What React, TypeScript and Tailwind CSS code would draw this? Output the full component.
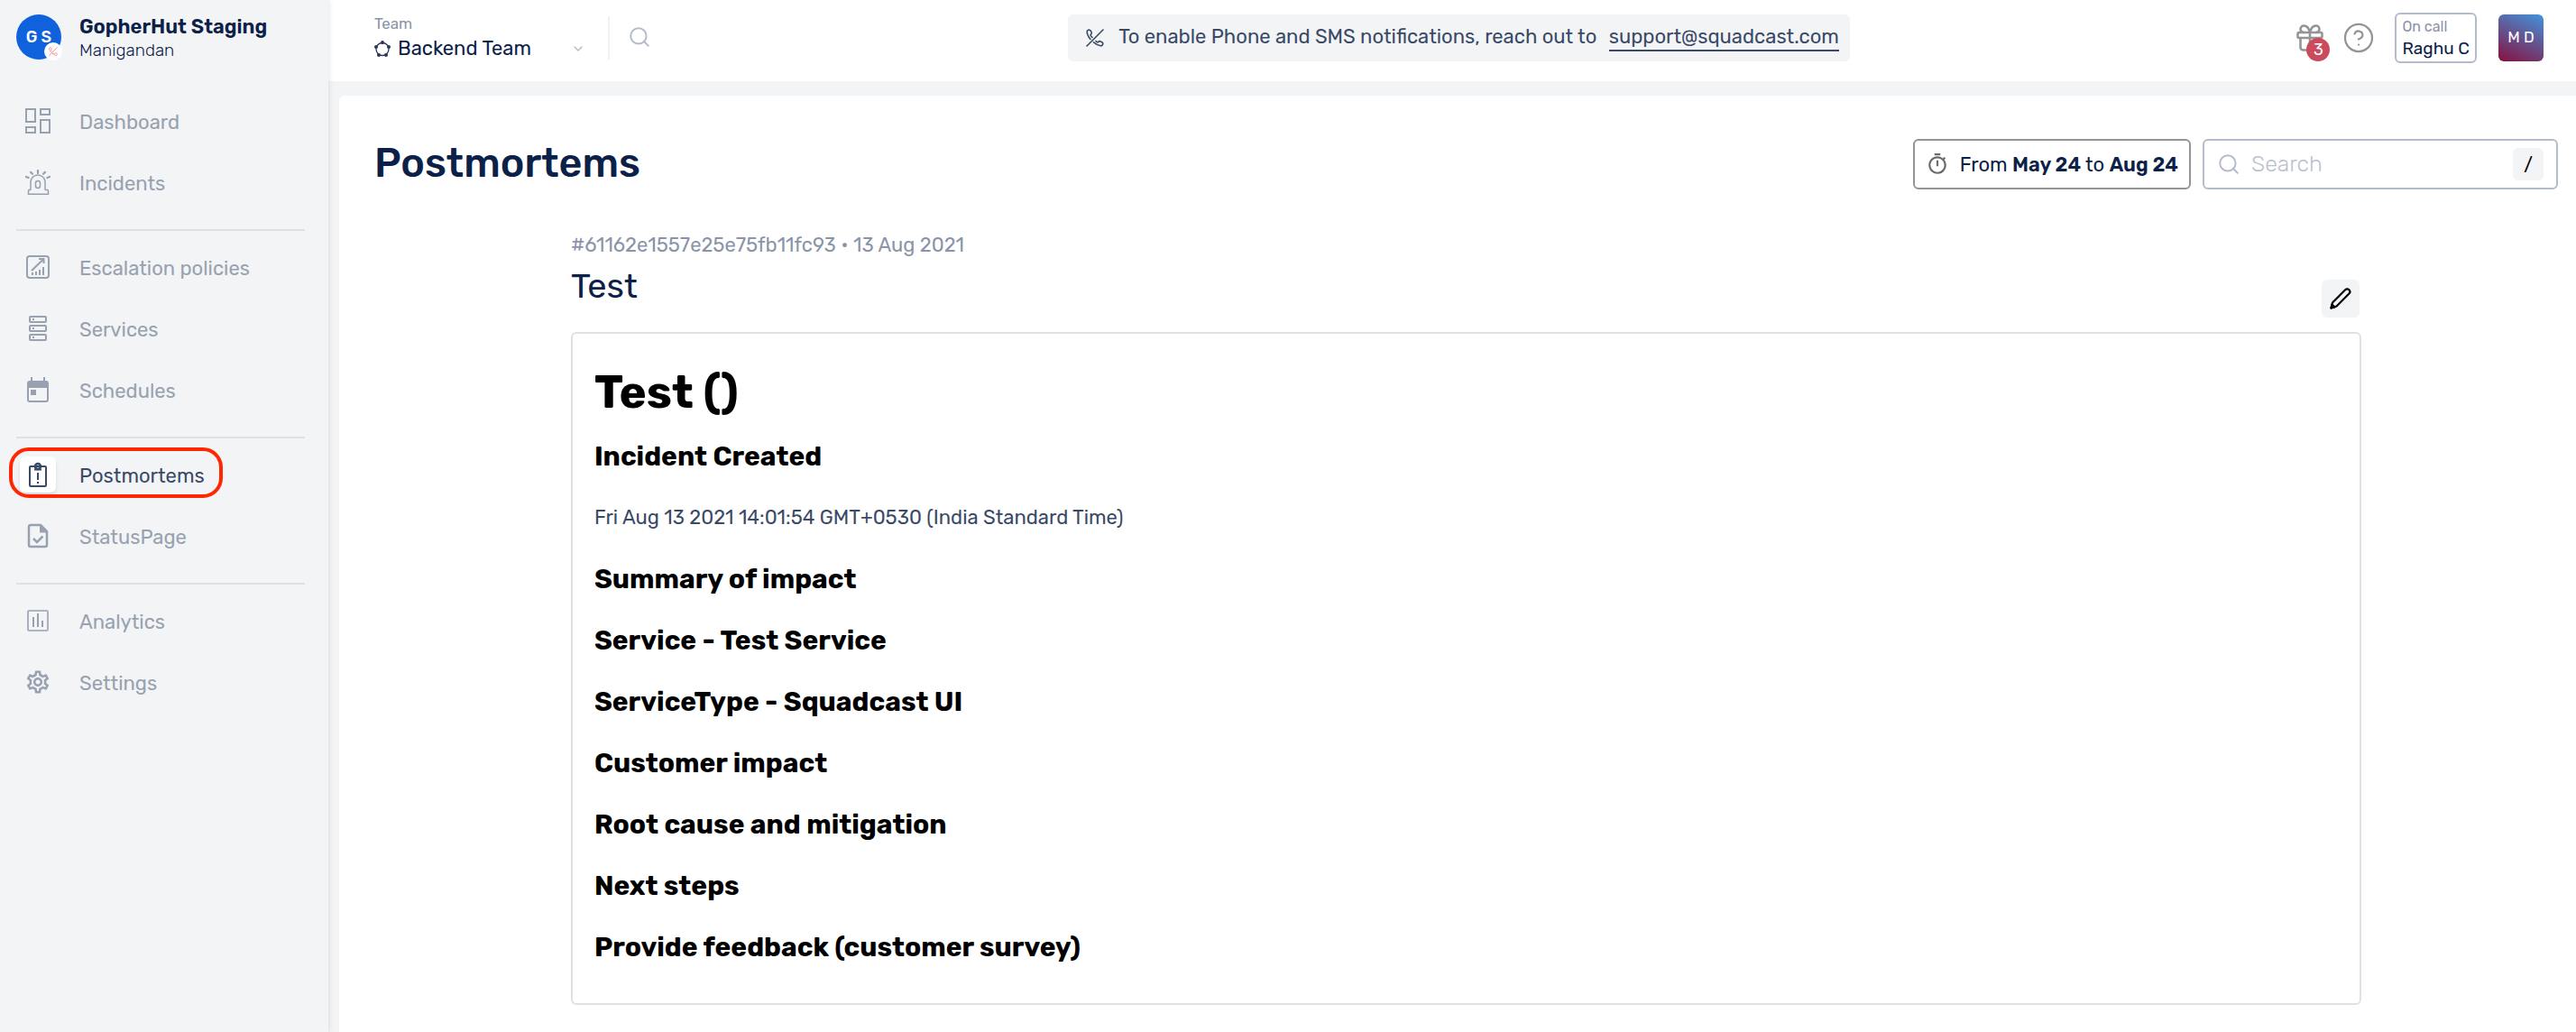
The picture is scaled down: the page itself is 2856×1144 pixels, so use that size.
import type { ReactNode } from "react";
import { ChevronDown, CircleHelp, Gift, Search } from "lucide-react";
import { MdOutlineSettings, MdOutlineTimer } from "react-icons/md";

function PhoneOff({ className }: { className: string }) {
  return (
    <svg viewBox="0 0 20 20" fill="none" stroke="currentColor" strokeWidth="1.6" strokeLinecap="round" strokeLinejoin="round" className={className} aria-hidden="true">
      <path d="M19 1 1 19" />
      <path d="M5 11.5C2.6 8.6 1.2 5.6 1.2 3.2 1.2 1.6 2.8 1 4 1.2c1.1.2 1.9 1.7 2.3 3 .3 1.1-.6 1.6-1.1 2.1-.4.5.8 2.2 1.8 3.2" />
      <path d="M8.5 14.8c2.4 2 5 3.6 7.6 4 1.6.2 2.7-1.2 2.7-2.6 0-1.2-1.7-2-3-2.5-1.2-.5-1.7.4-2.2 1-.5.5-1.7-.3-2.6-1.1" />
    </svg>
  );
}

function TeamRing() {
  return (
    <svg viewBox="0 0 18 18" className="size-[18px]" aria-hidden="true">
      <circle cx="9" cy="9.5" r="7" fill="none" stroke="#2b3759" strokeWidth="1.3" />
      <g fill="#2b3759">
        <circle cx="9" cy="2" r="2" />
        <circle cx="2" cy="7" r="2" />
        <circle cx="16" cy="7" r="2" />
        <circle cx="5" cy="16" r="2" />
        <circle cx="13" cy="16" r="2" />
      </g>
    </svg>
  );
}

function Pencil() {
  return (
    <svg viewBox="0 0 24 24" className="size-6" fill="none" stroke="currentColor" strokeWidth="2.2" strokeLinejoin="round" aria-hidden="true">
      <path d="M1.5 22.5 3 16.5 17.2 2.3a2.8 2.8 0 0 1 4.2 4.2L7.5 20.5z" />
      <path fill="currentColor" d="M1.5 22.5l1-4 3 3z" />
    </svg>
  );
}

function Glyph({ children, sw = 2 }: { children: ReactNode; sw?: number }) {
  return (
    <svg viewBox="0 0 28 28" className="size-7" fill="none" stroke="currentColor" strokeWidth={sw} aria-hidden="true">
      {children}
    </svg>
  );
}

const dashboard = (
  <Glyph>
    <path d="M1 1h10v14H1zM17 1h10v6H17zM1 21h10v6H1zM17 13h10v14H17z" />
  </Glyph>
);
const incidents = (
  <Glyph sw={1.5}>
    <path d="M6 22.5V14a8 8 0 0 1 16 0v8.5M6 22.5H4.5a1 1 0 0 0-1 1v3.7h22v-3.7a1 1 0 0 0-1-1H22" />
    <rect x="11.5" y="12.5" width="5" height="8" rx="2.5" />
    <path strokeWidth="2.2" strokeLinecap="round" d="M14 1v3M6 2.8l2 2M22 2.8l-2 2M1 8l2.5 1M27 8l-2.5 1" />
  </Glyph>
);
const escalation = (
  <Glyph>
    <rect x="2" y="2" width="24" height="24" rx="3" />
    <path d="M7 18 20 5.5M15 5h5.5v5M8 20v3M12 19v4M16 17v6M20 14v9" />
  </Glyph>
);
const services = (
  <Glyph>
    <rect x="5" y="1" width="18" height="6" rx="1" />
    <rect x="5" y="11" width="18" height="6" rx="1" />
    <rect x="5" y="21" width="18" height="6" rx="1" />
    <path d="M8 4h2M8 14h2M8 24h2" />
  </Glyph>
);
const schedules = (
  <Glyph>
    <rect x="3" y="5" width="22" height="22" rx="2" />
    <path d="M7 0v5M21 0v5" />
    <path fill="currentColor" stroke="none" d="M3 5h22v7H3zM6 14h6v6H6z" />
  </Glyph>
);
const postmortems = (
  <Glyph>
    <rect x="5" y="5" width="18" height="22" rx="1" />
    <circle cx="14" cy="5" r="3" strokeWidth="2.6" />
    <path d="M10 8.5h8M14 12v8M14 22v2" />
  </Glyph>
);
const statusPage = (
  <Glyph>
    <path strokeWidth="2.5" d="M17 2H6a2 2 0 0 0-2 2v20a2 2 0 0 0 2 2h16a2 2 0 0 0 2-2V9z" />
    <path fill="currentColor" stroke="none" d="M16 2l8.5 8.5H16z" />
    <path strokeWidth="2.5" d="M9 17l4 4 6.5-6.5" />
  </Glyph>
);
const analytics = (
  <Glyph>
    <rect x="3" y="3" width="22" height="22" rx="1" strokeWidth="1.6" />
    <path d="M9 10v11M14 6v15M19 14v7" />
  </Glyph>
);
const settings = <MdOutlineSettings className="size-[30px]" aria-hidden="true" />;

type Item = { label: string; icon: ReactNode; active?: boolean };

const groups: Item[][] = [
  [
    { label: "Dashboard", icon: dashboard },
    { label: "Incidents", icon: incidents },
  ],
  [
    { label: "Escalation policies", icon: escalation },
    { label: "Services", icon: services },
    { label: "Schedules", icon: schedules },
  ],
  [
    { label: "Postmortems", icon: postmortems, active: true },
    { label: "StatusPage", icon: statusPage },
  ],
  [
    { label: "Analytics", icon: analytics },
    { label: "Settings", icon: settings },
  ],
];

const sections = [
  "Summary of impact",
  "Service - Test Service",
  "ServiceType - Squadcast UI",
  "Customer impact",
  "Root cause and mitigation",
  "Next steps",
  "Provide feedback (customer survey)",
];

function NavLink({ label, icon, active }: Item) {
  return (
    <li className="relative">
      {active && (
        <span className="pointer-events-none absolute -left-2 top-1 h-14 w-[237px] rounded-[22px] border-4 border-[#ff2600]" />
      )}
      <a
        href="#"
        aria-current={active ? "page" : undefined}
        className={active ? "flex h-[68px] items-center text-[#3a4966]" : "flex h-[68px] items-center text-[#98a1b0]"}
      >
        <span
          className={
            active
              ? "ml-1 flex size-10 items-center justify-center rounded-md bg-white shadow-md"
              : "ml-1 flex size-10 items-center justify-center"
          }
        >
          {icon}
        </span>
        <span className="ml-[26px] pt-1 text-[22px] leading-7">{label}</span>
      </a>
    </li>
  );
}

function Sidebar() {
  return (
    <aside className="z-10 w-[364px] shrink-0 bg-[#f2f4f6] pl-[18px] pr-[26px] pt-4 shadow-[0_0_6px_rgba(0,0,0,0.14)]">
      <div className="flex h-[50px] items-center">
        <div className="relative flex size-[50px] items-center justify-center rounded-full bg-[#0f62dc] text-lg font-medium text-white">
          G S
          <span className="absolute -right-px -bottom-px flex size-5 items-center justify-center rounded-full bg-white text-[#f47b7b]">
            <PhoneOff className="size-2.5" />
          </span>
        </div>
        <div className="ml-5 pt-0.5">
          <div className="text-[22px] leading-7 font-semibold text-[#0c2148]">GopherHut Staging</div>
          <div className="text-[19px] leading-6 font-light text-[#0c2148]">Manigandan</div>
        </div>
      </div>
      <nav className="mt-[34px]">
        {groups.map((items, i) => (
          <ul key={i} className={i > 0 ? "mt-[18px] border-t-2 border-[#dee0e3] pt-1.5" : ""}>
            {items.map((item) => (
              <NavLink key={item.label} {...item} />
            ))}
          </ul>
        ))}
      </nav>
    </aside>
  );
}

function TopBar() {
  return (
    <header className="flex h-[90px] items-start bg-white pr-9 pl-[51px] pt-4">
      <div className="flex flex-1">
        <button type="button" className="w-[234px] text-left">
          <span className="block text-[17px] leading-5 text-[#8a94a8]">Team</span>
          <span className="mt-1 flex items-center">
            <TeamRing />
            <span className="ml-2 flex-1 text-[22px] leading-7 text-[#0c2148]">Backend Team</span>
            <ChevronDown className="size-4 text-[#b1b8ca]" />
          </span>
        </button>
        <span className="mt-0.5 ml-[25px] h-12 w-0.5 bg-[#f0f1f3]" />
        <button type="button" aria-label="Search everything" className="ml-5 flex h-[50px] items-center">
          <Search className="size-[26px] text-[#b4bbca]" strokeWidth={1.8} />
        </button>
      </div>
      <div className="flex h-[52px] items-center rounded-md bg-[#f2f4f6] pr-3 pl-5 text-[22px] text-[#3a4966]">
        <PhoneOff className="size-5" />
        <p className="ml-4 leading-7">
          To enable Phone and SMS notifications, reach out to{" "}
          <a href="mailto:support@squadcast.com" className="ml-2 inline-block border-b-2 border-[#3a4966]">
            support@squadcast.com
          </a>
        </p>
      </div>
      <div className="flex flex-1 justify-end">
        <button type="button" aria-label="3 updates" className="relative flex h-[52px] w-9 items-center justify-center text-[#949494]">
          <Gift className="size-9" strokeWidth={1.7} />
          <span className="absolute -right-1 bottom-0 flex size-[26px] items-center justify-center rounded-full bg-[#cb4b5d] text-lg text-white">3</span>
        </button>
        <button type="button" aria-label="Help" className="ml-[18px] flex h-[52px] items-center text-[#949494]">
          <CircleHelp className="size-9" strokeWidth={1.5} />
        </button>
        <button type="button" className="-mt-0.5 ml-[22px] h-14 rounded-md border-2 border-[#b4bbca] px-1.5 text-left">
          <span className="block text-base leading-6 text-[#8a94a8]">On call</span>
          <span className="block text-[19px] leading-6 text-[#0c2148]">Raghu C</span>
        </button>
        <button
          type="button"
          className="ml-6 h-[52px] w-[50px] rounded-md bg-linear-[25deg] from-[#87103f] to-[#4294dc] text-[17px] text-white"
        >
          M D
        </button>
      </div>
    </header>
  );
}

export default function App() {
  return (
    <div className="flex min-h-screen bg-[#f2f4f6] font-['Rubik','Inter',sans-serif]">
      <Sidebar />
      <div className="flex min-w-0 flex-1 flex-col">
        <TopBar />
        <main className="mt-4 ml-3 flex-1 rounded-tl-md bg-white pt-12 pr-5 pb-[30px] pl-[39px]">
          <div className="flex h-14 items-start justify-between">
            <h1 className="text-[45px] leading-[54px] font-medium text-[#0c2148]">Postmortems</h1>
            <div className="flex gap-[13px]">
              <button type="button" className="flex h-14 items-center rounded-md border-2 border-[#949494] px-3 text-[22px] text-[#0c2148]">
                <MdOutlineTimer className="size-[26px] text-[#6b6b6b]" aria-hidden="true" />
                <span className="ml-3">
                  From <b className="font-semibold">May 24</b> to <b className="font-semibold">Aug 24</b>
                </span>
              </button>
              <label className="flex h-14 w-[394px] items-center rounded-md border-2 border-[#b4bbca] px-3.5">
                <Search className="size-[26px] shrink-0 text-[#b4bbca]" strokeWidth={1.8} />
                <input
                  type="search"
                  aria-label="Search postmortems"
                  placeholder="Search"
                  className="ml-3 min-w-0 flex-1 text-[25px] font-light outline-none placeholder:text-[#b9c0cd]"
                />
                <kbd className="flex h-9 w-[34px] items-center justify-center rounded-md bg-[#f2f4f6] font-['Rubik','Inter',sans-serif] text-xl text-black">/</kbd>
              </label>
            </div>
          </div>
          <article className="mx-auto mt-12 w-[82%]">
            <div className="flex items-end justify-between">
              <div className="pb-2.5">
                <p className="text-[22px] leading-7 text-[#8a94a8]">#61162e1557e25e75fb11fc93 • 13 Aug 2021</p>
                <h2 className="mt-1.5 text-[38px] leading-[50px] text-[#0c2148]">Test</h2>
              </div>
              <button type="button" aria-label="Edit postmortem" className="mr-0.5 flex size-[42px] items-center justify-center rounded-md bg-[#f2f4f6] text-black">
                <Pencil />
              </button>
            </div>
            <div className="mt-4 rounded-md border-2 border-[#dfdfe6] px-6 pt-8 pb-11 text-black">
              <h1 className="text-[51px] leading-[66px] font-bold">Test ()</h1>
              <h3 className="mt-5 text-[30px] leading-9 font-bold">Incident Created</h3>
              <p className="mt-8 text-[22px] leading-9 text-[#3a4966]">
                Fri Aug 13 2021 14:01:54 GMT+0530 (India Standard Time)
              </p>
              {sections.map((title) => (
                <h3 key={title} className="mt-8 text-[30px] leading-9 font-bold">
                  {title}
                </h3>
              ))}
            </div>
          </article>
        </main>
      </div>
    </div>
  );
}
